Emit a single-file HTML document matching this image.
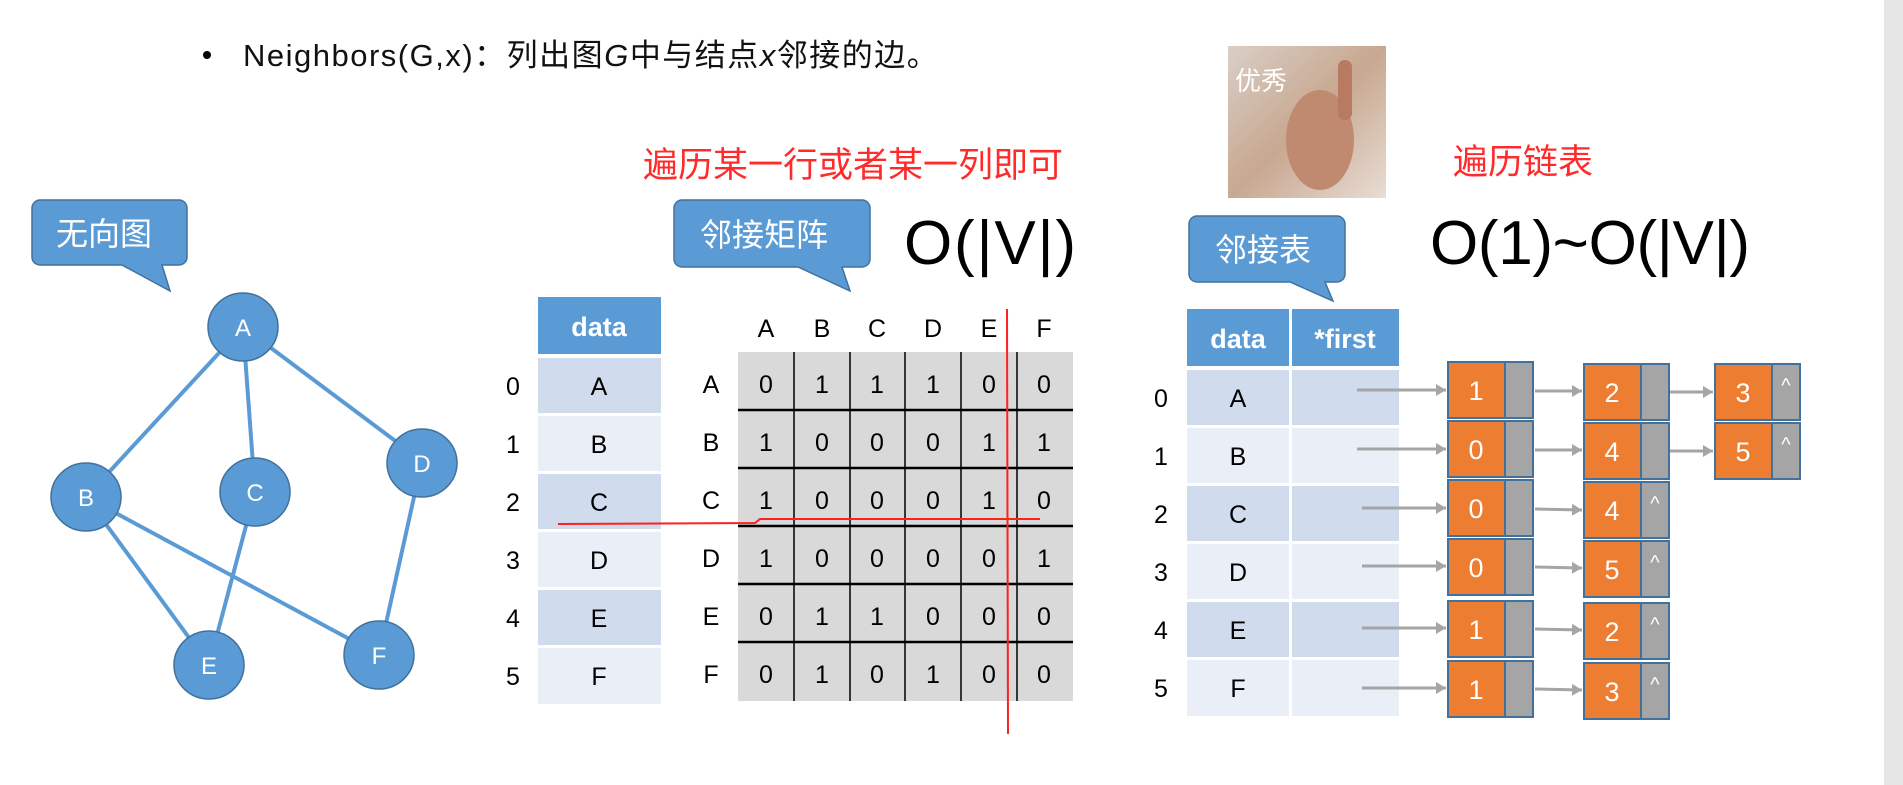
<!DOCTYPE html>
<html><head><meta charset="utf-8"><style>
html,body{margin:0;padding:0;background:#fff;width:1903px;height:785px;overflow:hidden}
svg{position:absolute;left:0;top:0}
text{font-family:"Liberation Sans","Noto Sans CJK SC",sans-serif}
</style></head><body>
<svg width="1903" height="785" viewBox="0 0 1903 785">
<rect x="1884" y="0" width="19" height="785" fill="#e6e6e6"/>
<!-- title -->
<circle cx="207" cy="55" r="4" fill="#000"/>
<text x="243" y="66" font-size="31" letter-spacing="1.5" fill="#111">Neighbors(G,x)：列出图<tspan font-style="italic">G</tspan>中与结点<tspan font-style="italic">x</tspan>邻接的边。</text>
<!-- photo -->
<defs><linearGradient id="ph" x1="0" y1="0" x2="1" y2="1"><stop offset="0" stop-color="#d9cfc7"/><stop offset="0.5" stop-color="#c8a890"/><stop offset="1" stop-color="#e8ddd5"/></linearGradient></defs>
<rect x="1228" y="46" width="158" height="152" fill="url(#ph)"/>
<ellipse cx="1320" cy="140" rx="34" ry="50" fill="#c08a70"/>
<rect x="1338" y="60" width="14" height="60" rx="7" fill="#b87a60"/>
<text x="1235" y="90" font-size="26" fill="#fff">优秀</text>
<!-- red texts -->
<text x="643" y="177" font-size="35" fill="#ff2b2b">遍历某一行或者某一列即可</text>
<text x="1453" y="174" font-size="35" fill="#ff2b2b">遍历链表</text>
<!-- callouts -->
<path d="M40,200 H179 a8,8 0 0 1 8,8 V257 a8,8 0 0 1 -8,8 H162 L170,291 L122,265 H40 a8,8 0 0 1 -8,-8 V208 a8,8 0 0 1 8,-8Z" fill="#5b9bd5" stroke="#41719c" stroke-width="1.5"/>
<text x="56" y="245" font-size="32" fill="#fff">无向图</text>
<path d="M682,200 H862 a8,8 0 0 1 8,8 V259 a8,8 0 0 1 -8,8 H842 L850,291 L798,267 H682 a8,8 0 0 1 -8,-8 V208 a8,8 0 0 1 8,-8Z" fill="#5b9bd5" stroke="#41719c" stroke-width="1.5"/>
<text x="700" y="246" font-size="32" fill="#fff">邻接矩阵</text>
<path d="M1197,216 H1337 a8,8 0 0 1 8,8 V274 a8,8 0 0 1 -8,8 H1325 L1333,301 L1290,282 H1197 a8,8 0 0 1 -8,-8 V224 a8,8 0 0 1 8,-8Z" fill="#5b9bd5" stroke="#41719c" stroke-width="1.5"/>
<text x="1215" y="261" font-size="32" fill="#fff">邻接表</text>
<text x="904" y="264" font-size="62" fill="#000" textLength="172">O(|V|)</text>
<text x="1430" y="264" font-size="62" fill="#000" textLength="320">O(1)~O(|V|)</text>
<!-- graph -->
<g stroke="#5b9bd5" stroke-width="4">
<line x1="243" y1="327" x2="86" y2="497"/><line x1="243" y1="327" x2="255" y2="492"/><line x1="243" y1="327" x2="422" y2="461"/>
<line x1="86" y1="497" x2="209" y2="665"/><line x1="86" y1="497" x2="379" y2="655"/><line x1="255" y1="492" x2="209" y2="665"/><line x1="422" y1="461" x2="379" y2="655"/>
</g>
<g fill="#5b9bd5" stroke="#41719c" stroke-width="1.5">
<ellipse cx="243" cy="327" rx="35" ry="34"/><ellipse cx="86" cy="497" rx="35" ry="34"/><ellipse cx="255" cy="492" rx="35" ry="34"/>
<ellipse cx="422" cy="463" rx="35" ry="34"/><ellipse cx="209" cy="665" rx="35" ry="34"/><ellipse cx="379" cy="655" rx="35" ry="34"/>
</g>
<g fill="#fff" font-size="24" text-anchor="middle">
<text x="243" y="336">A</text><text x="86" y="506">B</text><text x="255" y="501">C</text><text x="422" y="472">D</text><text x="209" y="674">E</text><text x="379" y="664">F</text>
</g>
<!-- left data table -->
<rect x="538" y="297" width="123" height="57" fill="#5b9bd5"/>
<text x="599" y="336" font-size="27" font-weight="bold" fill="#fff" text-anchor="middle">data</text>
<g font-size="25" text-anchor="middle" fill="#000">
<rect x="538" y="358" width="123" height="55" fill="#d0dcee"/><text x="599" y="395">A</text><text x="513" y="395">0</text>
<rect x="538" y="416" width="123" height="55" fill="#e9eef7"/><text x="599" y="453">B</text><text x="513" y="453">1</text>
<rect x="538" y="474" width="123" height="55" fill="#d0dcee"/><text x="599" y="511">C</text><text x="513" y="511">2</text>
<rect x="538" y="532" width="123" height="55" fill="#e9eef7"/><text x="599" y="569">D</text><text x="513" y="569">3</text>
<rect x="538" y="590" width="123" height="55" fill="#d0dcee"/><text x="599" y="627">E</text><text x="513" y="627">4</text>
<rect x="538" y="648" width="123" height="56" fill="#e9eef7"/><text x="599" y="685">F</text><text x="513" y="685">5</text>
</g>
<!-- matrix -->
<rect x="738" y="352" width="335" height="349" fill="#d9d9d9"/>
<g stroke="#000" stroke-width="1.5">
<line x1="794" y1="352" x2="794" y2="701"/><line x1="850" y1="352" x2="850" y2="701"/><line x1="905" y1="352" x2="905" y2="701"/><line x1="961" y1="352" x2="961" y2="701"/><line x1="1017" y1="352" x2="1017" y2="701"/>
<line x1="738" y1="410" x2="1073" y2="410" stroke-width="2.5"/><line x1="738" y1="468" x2="1073" y2="468" stroke-width="2.5"/><line x1="738" y1="526" x2="1073" y2="526" stroke-width="2.5"/><line x1="738" y1="584" x2="1073" y2="584" stroke-width="2.5"/><line x1="738" y1="642" x2="1073" y2="642" stroke-width="2.5"/>
</g>
<g font-size="25" text-anchor="middle" fill="#000">
<text x="766" y="337">A</text><text x="822" y="337">B</text><text x="877" y="337">C</text><text x="933" y="337">D</text><text x="989" y="337">E</text><text x="1044" y="337">F</text>
<text x="711" y="393">A</text><text x="711" y="451">B</text><text x="711" y="509">C</text><text x="711" y="567">D</text><text x="711" y="625">E</text><text x="711" y="683">F</text>
<text x="766" y="393">0</text><text x="822" y="393">1</text><text x="877" y="393">1</text><text x="933" y="393">1</text><text x="989" y="393">0</text><text x="1044" y="393">0</text>
<text x="766" y="451">1</text><text x="822" y="451">0</text><text x="877" y="451">0</text><text x="933" y="451">0</text><text x="989" y="451">1</text><text x="1044" y="451">1</text>
<text x="766" y="509">1</text><text x="822" y="509">0</text><text x="877" y="509">0</text><text x="933" y="509">0</text><text x="989" y="509">1</text><text x="1044" y="509">0</text>
<text x="766" y="567">1</text><text x="822" y="567">0</text><text x="877" y="567">0</text><text x="933" y="567">0</text><text x="989" y="567">0</text><text x="1044" y="567">1</text>
<text x="766" y="625">0</text><text x="822" y="625">1</text><text x="877" y="625">1</text><text x="933" y="625">0</text><text x="989" y="625">0</text><text x="1044" y="625">0</text>
<text x="766" y="683">0</text><text x="822" y="683">1</text><text x="877" y="683">0</text><text x="933" y="683">1</text><text x="989" y="683">0</text><text x="1044" y="683">0</text>
</g>
<path d="M558,524 L755,523 L760,519 L1040,519" stroke="#ff2020" stroke-width="2" fill="none"/>
<line x1="1007" y1="309" x2="1008" y2="734" stroke="#ff2020" stroke-width="2"/>
<!-- right table -->
<rect x="1187" y="309" width="102" height="57" fill="#5b9bd5"/><rect x="1292" y="309" width="107" height="57" fill="#5b9bd5"/>
<text x="1238" y="348" font-size="27" font-weight="bold" fill="#fff" text-anchor="middle">data</text>
<text x="1345" y="348" font-size="27" font-weight="bold" fill="#fff" text-anchor="middle">*first</text>
<g font-size="25" text-anchor="middle" fill="#000">
<rect x="1187" y="370" width="102" height="55" fill="#d0dcee"/><rect x="1292" y="370" width="107" height="55" fill="#d0dcee"/><text x="1238" y="407">A</text><text x="1161" y="407">0</text>
<rect x="1187" y="428" width="102" height="55" fill="#e9eef7"/><rect x="1292" y="428" width="107" height="55" fill="#e9eef7"/><text x="1238" y="465">B</text><text x="1161" y="465">1</text>
<rect x="1187" y="486" width="102" height="55" fill="#d0dcee"/><rect x="1292" y="486" width="107" height="55" fill="#d0dcee"/><text x="1238" y="523">C</text><text x="1161" y="523">2</text>
<rect x="1187" y="544" width="102" height="55" fill="#e9eef7"/><rect x="1292" y="544" width="107" height="55" fill="#e9eef7"/><text x="1238" y="581">D</text><text x="1161" y="581">3</text>
<rect x="1187" y="602" width="102" height="55" fill="#d0dcee"/><rect x="1292" y="602" width="107" height="55" fill="#d0dcee"/><text x="1238" y="639">E</text><text x="1161" y="639">4</text>
<rect x="1187" y="660" width="102" height="56" fill="#e9eef7"/><rect x="1292" y="660" width="107" height="56" fill="#e9eef7"/><text x="1238" y="697">F</text><text x="1161" y="697">5</text>
</g>
<defs><marker id="ar" markerUnits="userSpaceOnUse" markerWidth="10" markerHeight="12" refX="10" refY="6" orient="auto"><path d="M0,0 L10,6 L0,12Z" fill="#a5a5a5"/></marker>
<g id="nd"><rect x="0" y="0" width="57" height="56" fill="#ed7d31" stroke="#41719c" stroke-width="2"/><rect x="57" y="0" width="28" height="56" fill="#a5a5a5" stroke="#41719c" stroke-width="2"/></g></defs>
<g stroke="#a5a5a5" stroke-width="3" marker-end="url(#ar)">
<line x1="1357" y1="390" x2="1446" y2="390"/><line x1="1357" y1="449" x2="1446" y2="449"/><line x1="1362" y1="508" x2="1446" y2="508"/><line x1="1362" y1="566" x2="1446" y2="566"/><line x1="1362" y1="628" x2="1446" y2="628"/><line x1="1362" y1="688" x2="1446" y2="688"/>
<line x1="1535" y1="391" x2="1582" y2="391"/><line x1="1535" y1="450" x2="1582" y2="450"/><line x1="1535" y1="509" x2="1582" y2="510"/><line x1="1535" y1="567" x2="1582" y2="568"/><line x1="1535" y1="629" x2="1582" y2="630"/><line x1="1535" y1="689" x2="1582" y2="690"/>
<line x1="1670" y1="392" x2="1713" y2="392"/><line x1="1670" y1="451" x2="1713" y2="451"/>
</g>
<use href="#nd" x="1448" y="362"/><use href="#nd" x="1448" y="421"/><use href="#nd" x="1448" y="480"/><use href="#nd" x="1448" y="539"/><use href="#nd" x="1448" y="601"/><use href="#nd" x="1448" y="661"/>
<use href="#nd" x="1584" y="364"/><use href="#nd" x="1584" y="423"/><use href="#nd" x="1584" y="482"/><use href="#nd" x="1584" y="541"/><use href="#nd" x="1584" y="603"/><use href="#nd" x="1584" y="663"/>
<use href="#nd" x="1715" y="364"/><use href="#nd" x="1715" y="423"/>
<g font-size="27" fill="#fff" text-anchor="middle">
<text x="1476" y="400">1</text><text x="1476" y="459">0</text><text x="1476" y="518">0</text><text x="1476" y="577">0</text><text x="1476" y="639">1</text><text x="1476" y="699">1</text>
<text x="1612" y="402">2</text><text x="1612" y="461">4</text><text x="1612" y="520">4</text><text x="1612" y="579">5</text><text x="1612" y="641">2</text><text x="1612" y="701">3</text>
<text x="1743" y="402">3</text><text x="1743" y="461">5</text>
<g font-size="20"><text x="1655" y="510">^</text><text x="1655" y="569">^</text><text x="1655" y="631">^</text><text x="1655" y="691">^</text><text x="1786" y="392">^</text><text x="1786" y="451">^</text></g>
</g>
</svg>
</body></html>
